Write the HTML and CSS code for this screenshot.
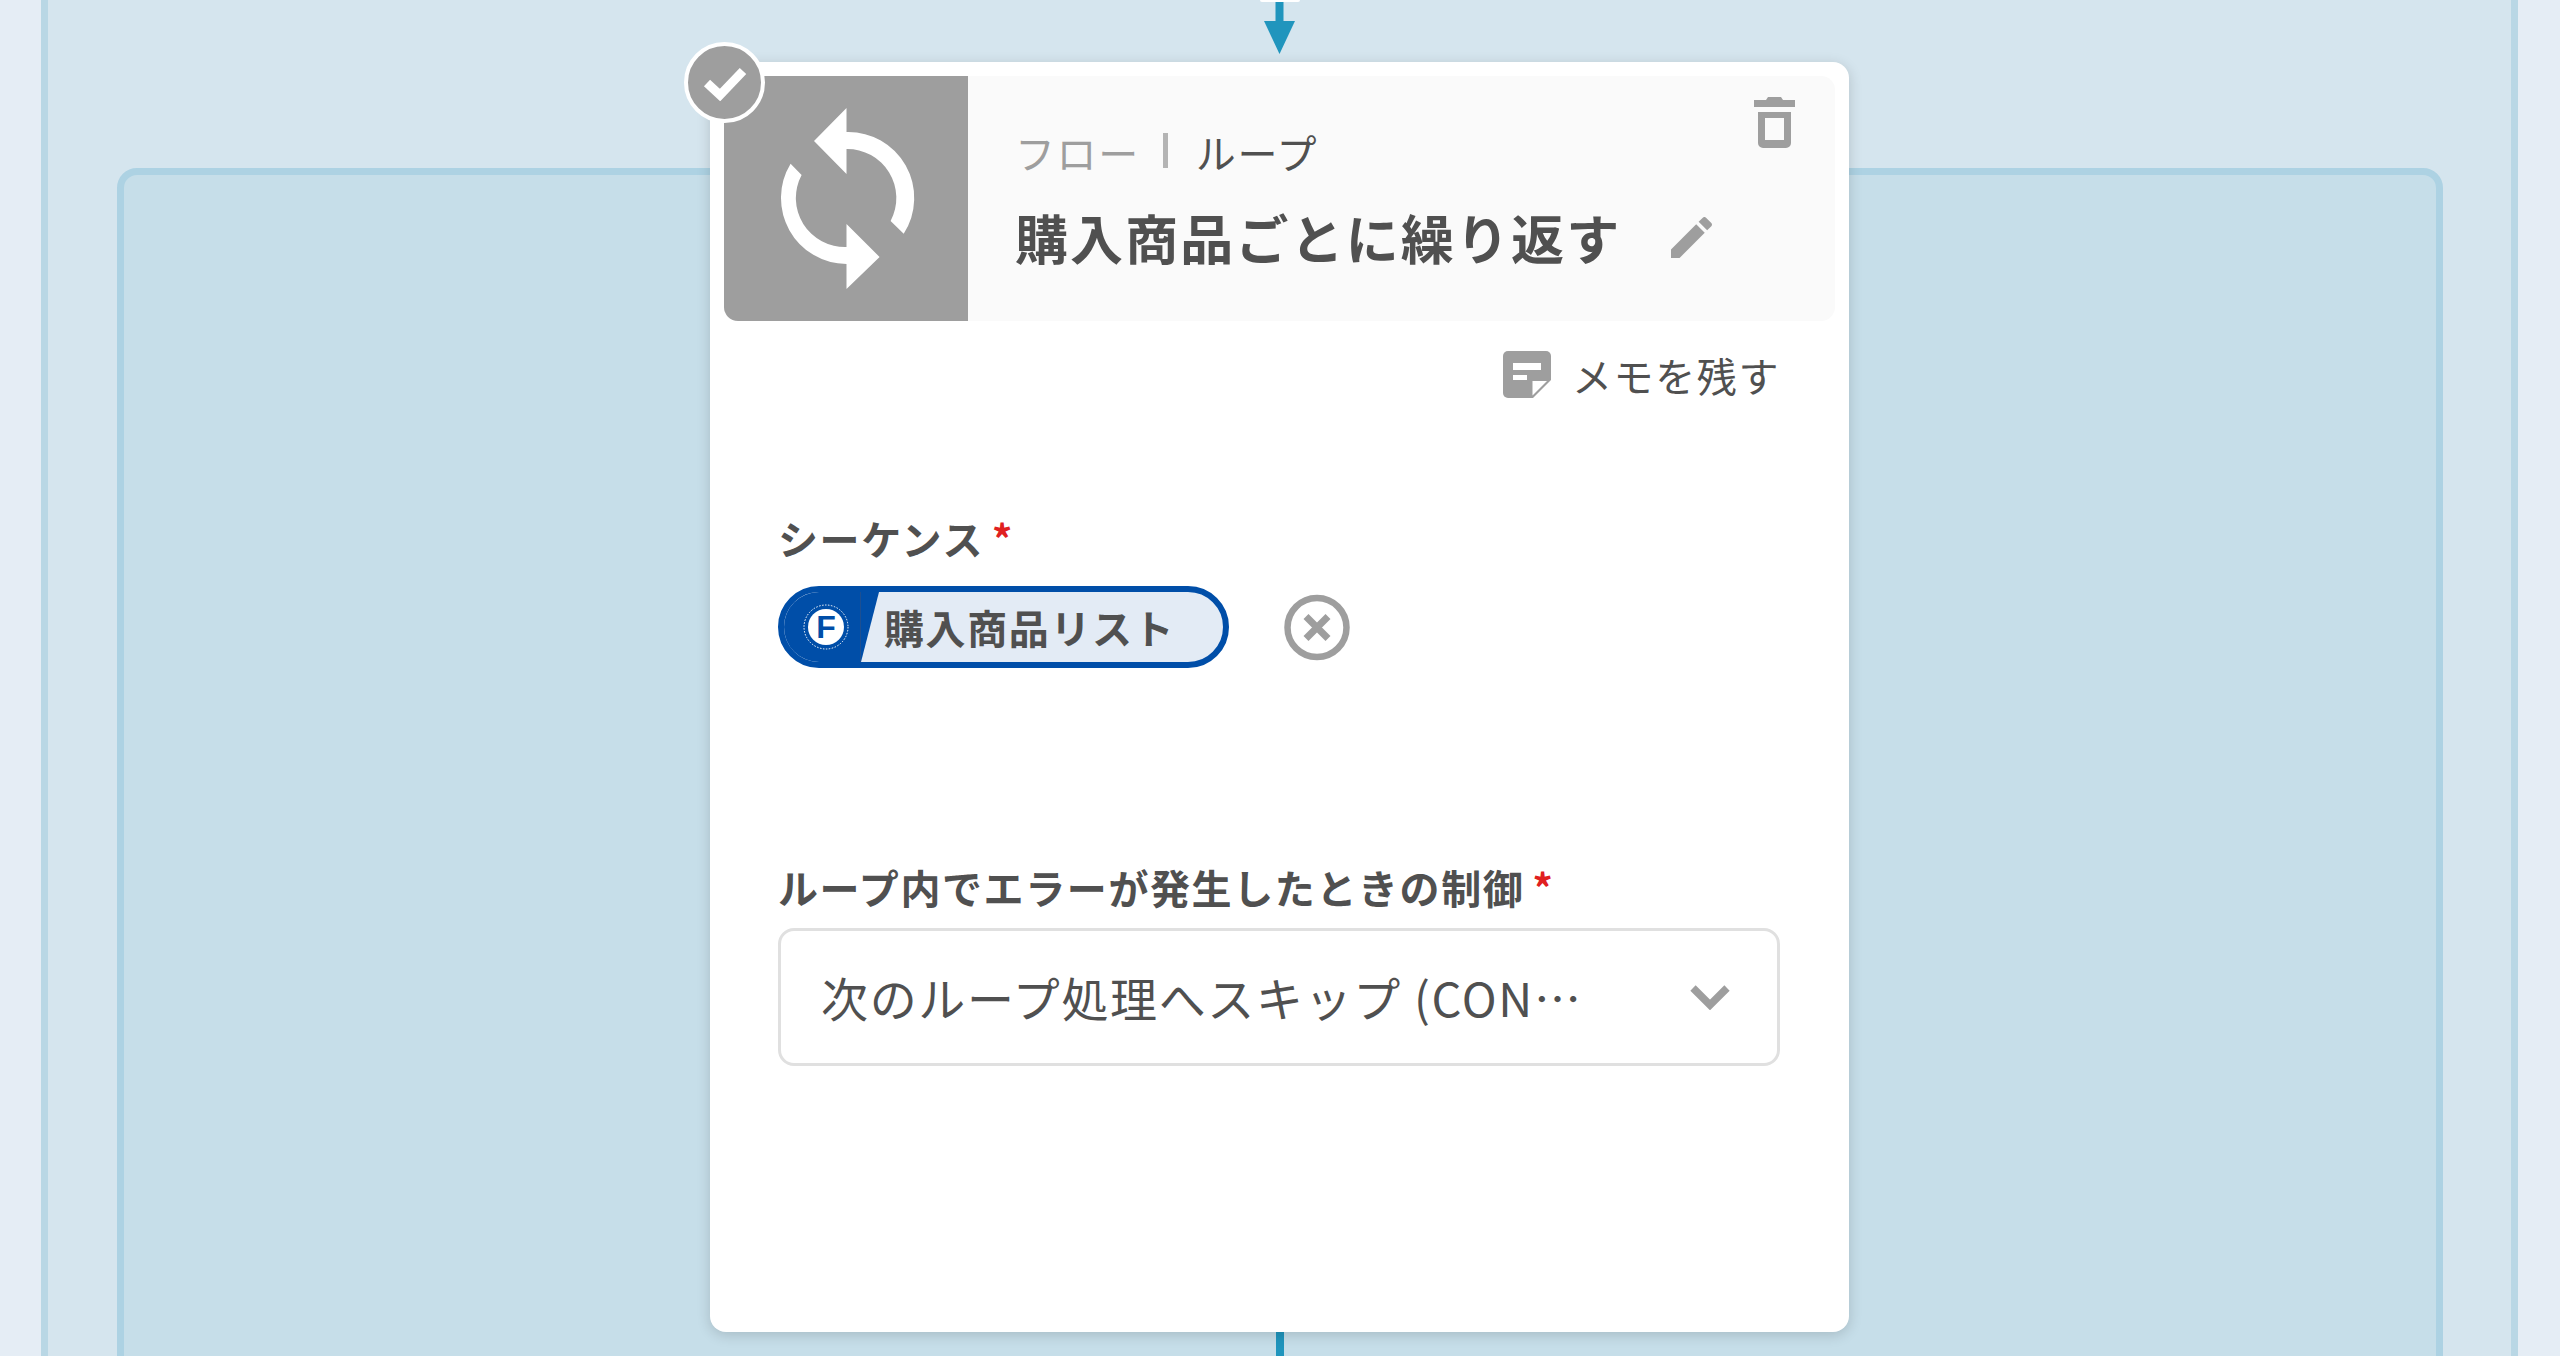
FILE: index.html
```html
<!DOCTYPE html>
<html lang="ja">
<head>
    <meta charset="UTF-8">
    <meta name="viewport" content="width=device-width, initial-scale=1.0">
    <title>フロー ループ</title>
    <link rel="stylesheet" href="styles.css">
</head>
<body>
    <div class="flow-frame">
        <div class="loop-frame"></div>

        <div class="flow-column">
            <div class="prev-node"></div>
            <svg class="flow-arrow" width="31" height="52" viewBox="0 0 31 52">
                <rect x="11.5" y="0" width="8" height="20" fill="#2095bd"/>
                <polygon points="0,19 31,19 15.5,52" fill="#2095bd"/>
            </svg>

            <div class="node-card">
                <div class="check-badge">
                    <svg width="46" height="36" viewBox="0 0 46 36">
                        <polyline points="5,18 18,30 41,6" fill="none" stroke="#fff" stroke-width="9"/>
                    </svg>
                </div>

                <div class="node-header">
                    <div class="node-tile">
                        <svg width="244" height="245" viewBox="0 0 244 245">
                            <path fill="#fff" d="M122.5 32 L90 65 L122.5 98 V73 A49 49 0 0 1 166.6 145 L179.7 157.7 A66 66 0 0 0 122.5 56 Z"/>
                            <path fill="#fff" d="M122.5 213 L155.6 181 L122.5 148 V171 A49 49 0 0 1 77.6 99 L66.6 87.7 A66 66 0 0 0 122.5 188 Z"/>
                        </svg>
                    </div>
                    <div class="node-heading">
                        <div class="breadcrumb">
                            <span class="breadcrumb-root">フロー</span>
                            <span class="breadcrumb-sep"></span>
                            <span>ループ</span>
                        </div>
                        <div class="node-title">
                            <span>購入商品ごとに繰り返す</span>
                            <svg class="edit-icon" width="41" height="41" viewBox="3 3 18 18">
                                <path fill="#9e9e9e" d="M3 17.25V21h3.75L17.81 9.94l-3.75-3.75L3 17.25zM20.71 7.04c.39-.39.39-1.02 0-1.41l-2.34-2.34c-.39-.39-1.02-.39-1.41 0l-1.83 1.83 3.75 3.75 1.83-1.83z"/>
                            </svg>
                        </div>
                    </div>
                    <svg class="trash-icon" width="41" height="51" viewBox="0 0 41 51">
                        <path fill="#9e9e9e" d="M14 0h13l2 3h12v7H0V3h12z"/>
                        <path fill="#9e9e9e" fill-rule="evenodd" d="M4 15h33v31a5 5 0 0 1-5 5H9a5 5 0 0 1-5-5z M11 21v22h19V21z"/>
                    </svg>
                </div>

                <div class="node-body">
                    <div class="memo-link">
                        <svg width="48" height="47" viewBox="0 0 48 47">
                            <path fill="#9e9e9e" d="M5 0H43a5 5 0 0 1 5 5V29L30 47H5a5 5 0 0 1-5-5V5a5 5 0 0 1 5-5z"/>
                            <rect x="10" y="12" width="28" height="7" fill="#fff"/>
                            <rect x="10" y="24" width="14" height="5" fill="#fff"/>
                            <polygon points="29.5,30 44,30 29.5,44.5" fill="#fff"/>
                        </svg>
                        <span>メモを残す</span>
                    </div>

                    <div class="field-label field-sequence">シーケンス<span class="required">*</span></div>
                    <div class="chip-row">
                        <div class="chip">
                            <svg class="chip-type" width="95" height="70" viewBox="0 0 95 70">
                                <polygon points="0,0 95,0 77,70 0,70" fill="#004ea8"/>
                                <line x1="76.5" y1="0" x2="76.5" y2="70" stroke="#1d4f91" stroke-width="1"/>
                                <circle cx="42" cy="35" r="22" fill="none" stroke="#fff" stroke-width="1" stroke-dasharray="1.5 1.5"/>
                                <circle cx="42" cy="35" r="18" fill="#fff"/>
                                <text x="42" y="46" text-anchor="middle" class="chip-type-letter">F</text>
                            </svg>
                            <span class="chip-text">購入商品リスト</span>
                        </div>
                        <svg class="chip-clear" width="66" height="67" viewBox="0 0 66 67">
                            <circle cx="33" cy="33.5" r="29.5" fill="none" stroke="#9e9e9e" stroke-width="6.5"/>
                            <path d="M22 22.5 L44 44.5 M44 22.5 L22 44.5" stroke="#9e9e9e" stroke-width="7"/>
                        </svg>
                    </div>

                    <div class="field-label field-error">ループ内でエラーが発生したときの制御<span class="required">*</span></div>
                    <div class="select-box">
                        <span class="select-value">次のループ処理へスキップ (CONTINUE)</span>
                        <svg width="40" height="25" viewBox="0 0 40 25">
                            <polyline points="3,3 20,20 37,3" fill="none" stroke="#9e9e9e" stroke-width="7.5"/>
                        </svg>
                    </div>
                </div>
            </div>

            <div class="flow-line"></div>
        </div>
    </div>
</body>
</html>
```

FILE: styles.css
```css
* {
    box-sizing: border-box;
}

body {
    margin: 0;
    background-color: #e5edf5;
    font-family: 'Noto Sans CJK JP', 'Noto Sans', sans-serif;
    color: #505050;
}

.flow-frame {
    display: grid;
    grid-template-columns: 100%;
    grid-template-rows: 100%;
    height: 100vh;
    margin-left: 41px;
    width: 2477px;
    background-color: #d5e5ee;
    border-left: 7px solid #b9d7e5;
    border-right: 7px solid #b9d7e5;
    overflow: hidden;
}

.loop-frame {
    grid-area: 1 / 1;
    margin: 168px 68px -100px 69px;
    background-color: #c6dee9;
    border: 7px solid #add2e3;
    border-radius: 20px;
}

.flow-column {
    grid-area: 1 / 1;
    display: flex;
    flex-direction: column;
    align-items: center;
}

.prev-node {
    flex-shrink: 0;
    width: 40px;
    height: 2px;
    background-color: #fff;
    border-radius: 0 0 20px 20px;
}

.flow-arrow {
    display: block;
    flex-shrink: 0;
}

.node-card {
    position: relative;
    flex-shrink: 0;
    width: 1139px;
    height: 1270px;
    margin-top: 8px;
    padding: 14px;
    background-color: #fff;
    border-radius: 16px;
    box-shadow: 0 3px 14px rgba(0, 0, 0, 0.16);
}

.check-badge {
    position: absolute;
    left: -26px;
    top: -20px;
    display: flex;
    justify-content: center;
    align-items: center;
    width: 81px;
    height: 81px;
    background-color: #9e9e9e;
    border: 4px solid #fff;
    border-radius: 50%;
}

.node-header {
    display: flex;
    height: 245px;
    background-color: #fafafa;
    border-radius: 14px;
}

.node-tile {
    flex-shrink: 0;
    width: 244px;
    height: 245px;
    background-color: #9e9e9e;
    border-radius: 0 0 0 14px;
}

.node-tile svg {
    display: block;
}

.node-heading {
    flex: 1;
    padding: 52px 0 0 47px;
}

.breadcrumb {
    display: flex;
    align-items: center;
    height: 48px;
    font-size: 40px;
    line-height: 48px;
    letter-spacing: 0.04em;
}

.breadcrumb-root {
    color: #9e9e9e;
}

.breadcrumb-sep {
    width: 5px;
    height: 35px;
    margin: -4px 28px 0 23px;
    background-color: #b4b4b4;
}

.node-title {
    display: flex;
    align-items: center;
    height: 72px;
    margin-top: 25px;
    font-size: 53px;
    font-weight: 700;
    line-height: 72px;
    letter-spacing: 0.04em;
}

.edit-icon {
    margin-left: 50px;
}

.trash-icon {
    flex-shrink: 0;
    margin: 21px 40px 0 0;
}

.node-body {
    padding: 0 55px 0 54px;
}

.memo-link {
    display: flex;
    justify-content: flex-end;
    align-items: center;
    height: 47px;
    margin-top: 30px;
    font-size: 40px;
    letter-spacing: 0.04em;
}

.memo-link span {
    margin-left: 21px;
}

.field-label {
    font-size: 40px;
    font-weight: 700;
    line-height: 48px;
    letter-spacing: 0.04em;
}

.field-sequence {
    margin-top: 116px;
}

.field-error {
    margin-top: 195px;
}

.required {
    margin-left: 8px;
    color: #e02020;
}

.chip-row {
    display: flex;
    align-items: center;
    margin-top: 24px;
}

.chip {
    display: flex;
    align-items: center;
    height: 82px;
    padding-right: 48px;
    background-color: #e3ebf5;
    border: 6px solid #004ea8;
    border-radius: 41px;
    overflow: hidden;
}

.chip-type {
    display: block;
    flex-shrink: 0;
}

.chip-type-letter {
    font-family: 'Liberation Sans', sans-serif;
    font-size: 32px;
    font-weight: 700;
    fill: #004ea8;
}

.chip-text {
    margin-left: 5px;
    font-size: 40px;
    font-weight: 700;
    letter-spacing: 0.04em;
    white-space: nowrap;
}

.chip-clear {
    margin-left: 55px;
}

.select-box {
    display: flex;
    justify-content: space-between;
    align-items: center;
    height: 138px;
    margin-top: 17px;
    padding: 0 47px 0 40px;
    border: 3px solid #e0e0e0;
    border-radius: 16px;
}

.select-value {
    width: 770px;
    font-size: 47px;
    line-height: 60px;
    letter-spacing: 0.035em;
    white-space: nowrap;
    overflow: hidden;
    text-overflow: ellipsis;
}

.flow-line {
    flex-shrink: 0;
    width: 8px;
    height: 40px;
    background-color: #2095bd;
}
```
